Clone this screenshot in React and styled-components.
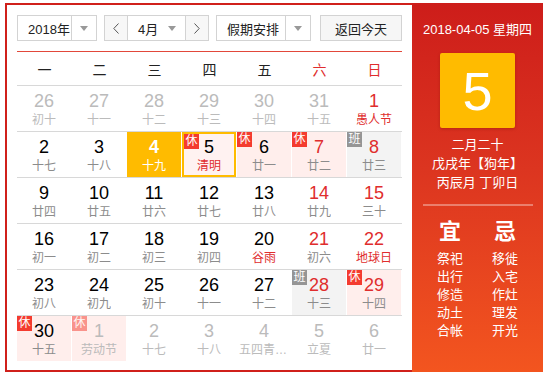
import React from 'react'
import styled, { createGlobalStyle, css } from 'styled-components'

const GlobalStyle = createGlobalStyle`
  body {
    margin: 0;
    background: #fff;
    font-family: "Liberation Sans", Arial, "Noto Sans CJK SC", sans-serif;
  }
`

const weekdays = [
  { name: '一' }, { name: '二' }, { name: '三' }, { name: '四' }, { name: '五' },
  { name: '六', red: true }, { name: '日', red: true },
]

// [day, lunar, flags] o=other month r=red number f=festival t=today s=selected x=休 b=班
const weeks = [
  [[26, '初十', 'o'], [27, '十一', 'o'], [28, '十二', 'o'], [29, '十三', 'o'], [30, '十四', 'o'], [31, '十五', 'o'], [1, '愚人节', 'rf']],
  [[2, '十七', ''], [3, '十八', ''], [4, '十九', 't'], [5, '清明', 'sxf'], [6, '廿一', 'x'], [7, '廿二', 'xr'], [8, '廿三', 'br']],
  [[9, '廿四', ''], [10, '廿五', ''], [11, '廿六', ''], [12, '廿七', ''], [13, '廿八', ''], [14, '廿九', 'r'], [15, '三十', 'r']],
  [[16, '初一', ''], [17, '初二', ''], [18, '初三', ''], [19, '初四', ''], [20, '谷雨', 'f'], [21, '初六', 'r'], [22, '地球日', 'rf']],
  [[23, '初八', ''], [24, '初九', ''], [25, '初十', ''], [26, '十一', ''], [27, '十二', ''], [28, '十三', 'br'], [29, '十四', 'xr']],
  [[30, '十五', 'x'], [1, '劳动节', 'ox'], [2, '十七', 'o'], [3, '十八', 'o'], [4, '五四青年节', 'o'], [5, '立夏', 'o'], [6, '廿一', 'o']],
]

const good = ['祭祀', '出行', '修造', '动土', '合帐']
const bad = ['移徙', '入宅', '作灶', '理发', '开光']

const Chevron = ({ left }) => (
  <svg width="6" height="11" viewBox="0 0 6 11">
    <polyline
      points={left ? '5.5,0.5 0.8,5.5 5.5,10.5' : '0.5,0.5 5.2,5.5 0.5,10.5'}
      fill="none"
      stroke="#555"
      strokeWidth="1"
    />
  </svg>
)

const DayCell = ({ day }) => {
  const [num, lunar, flags] = day
  const has = (c) => flags.includes(c)
  return (
    <Cell
      $today={has('t')}
      $selected={has('s')}
      $rest={has('x')}
      $work={has('b')}
    >
      {has('x') && <Badge $faded={has('o')}>休</Badge>}
      {has('b') && <Badge $work>班</Badge>}
      <DayNum $other={has('o')} $red={has('r')} $today={has('t')}>{num}</DayNum>
      <Lunar $other={has('o')} $festival={has('f')} $today={has('t')}>{lunar}</Lunar>
    </Cell>
  )
}

const App = () => {
  return (
    <React.Fragment>
      <GlobalStyle />
      <Page>
        <Frame>
          <Main>
            <Toolbar>
              <Select $width={80}>
                <SelectText>2018年</SelectText>
                <SelectArrow><Caret /></SelectArrow>
              </Select>
              <MonthGroup>
                <NavButton><Chevron left /></NavButton>
                <MonthSelect>
                  <span>4月</span>
                  <Caret />
                </MonthSelect>
                <NavButton><Chevron /></NavButton>
              </MonthGroup>
              <Select $width={95}>
                <SelectText>假期安排</SelectText>
                <SelectArrow><Caret /></SelectArrow>
              </Select>
              <TodayButton>返回今天</TodayButton>
            </Toolbar>
            <HeadRow>
              {weekdays.map((w) => (
                <HeadCell key={w.name} $red={w.red}>{w.name}</HeadCell>
              ))}
            </HeadRow>
            {weeks.map((week, i) => (
              <WeekRow key={i} $last={i === weeks.length - 1}>
                {week.map((day, j) => (
                  <DayCell key={j} day={day} />
                ))}
              </WeekRow>
            ))}
          </Main>
          <Side>
            <SideDate>2018-04-05 星期四</SideDate>
            <BigDay>5</BigDay>
            <SideLunar>
              <div>二月二十</div>
              <div>戊戌年【狗年】</div>
              <div>丙辰月 丁卯日</div>
            </SideLunar>
            <SideDivider />
            <Almanac>
              <AlmanacCol>
                <AlmanacTitle>宜</AlmanacTitle>
                {good.map((g) => <AlmanacItem key={g}>{g}</AlmanacItem>)}
              </AlmanacCol>
              <AlmanacCol>
                <AlmanacTitle>忌</AlmanacTitle>
                {bad.map((b) => <AlmanacItem key={b}>{b}</AlmanacItem>)}
              </AlmanacCol>
            </Almanac>
          </Side>
        </Frame>
      </Page>
    </React.Fragment>
  )
}

const Page = styled.div`
  padding: 3px 0 0 5px;
`

const Frame = styled.div`
  display: flex;
  width: 538px;
  height: 369px;
`

const Main = styled.div`
  box-sizing: border-box;
  width: 407px;
  height: 369px;
  border: 2px solid #d0201b;
  border-right: none;
  padding: 10px 10px 0 10px;
  background: #fff;
`

const Toolbar = styled.div`
  display: flex;
  align-items: center;
  height: 26px;
  padding-bottom: 10px;
  border-bottom: 1px solid #e2483a;
`

const Select = styled.div`
  box-sizing: border-box;
  display: flex;
  width: ${({ $width }) => $width}px;
  height: 26px;
  border: 1px solid #d3d3d3;
  background: #fff;
  margin-right: 7px;
  font-size: 13px;
  color: #222;
`

const SelectText = styled.div`
  flex: 1;
  display: flex;
  align-items: center;
  padding-left: 10px;
  border-right: 1px solid #d3d3d3;
`

const SelectArrow = styled.div`
  width: 24px;
  display: flex;
  align-items: center;
  justify-content: center;
`

const Caret = styled.span`
  display: inline-block;
  width: 0;
  height: 0;
  border-left: 4px solid transparent;
  border-right: 4px solid transparent;
  border-top: 5px solid #999;
`

const MonthGroup = styled.div`
  box-sizing: border-box;
  display: flex;
  width: 105px;
  height: 26px;
  border: 1px solid #d3d3d3;
  margin-right: 7px;
`

const NavButton = styled.div`
  width: 22px;
  display: flex;
  align-items: center;
  justify-content: center;
  background: #f7f7f7;
`

const MonthSelect = styled.div`
  flex: 1;
  display: flex;
  align-items: center;
  justify-content: space-between;
  padding: 0 9px 0 10px;
  border-left: 1px solid #d3d3d3;
  border-right: 1px solid #d3d3d3;
  background: #fff;
  font-size: 13px;
  color: #222;
`

const TodayButton = styled.div`
  box-sizing: border-box;
  width: 82px;
  height: 26px;
  margin-left: 2px;
  border: 1px solid #d3d3d3;
  background: #f6f6f6;
  display: flex;
  align-items: center;
  justify-content: center;
  font-size: 13px;
  color: #222;
`

const HeadRow = styled.div`
  display: grid;
  grid-template-columns: repeat(7, 55px);
  height: 33px;
  border-bottom: 1px solid #d8d8d8;
`

const HeadCell = styled.div`
  display: flex;
  align-items: center;
  justify-content: center;
  font-size: 14px;
  color: ${({ $red }) => ($red ? '#e02d2d' : '#222')};
`

const WeekRow = styled.div`
  display: grid;
  grid-template-columns: repeat(7, 55px);
  height: 45px;
  border-bottom: ${({ $last }) => ($last ? 'none' : '1px solid #d8d8d8')};
`

const Cell = styled.div`
  position: relative;
  box-sizing: border-box;
  width: 54px;
  height: 45px;
  display: flex;
  flex-direction: column;
  align-items: center;
  padding-top: 5px;
  ${({ $rest }) => $rest && css`background: #ffeeec;`}
  ${({ $work }) => $work && css`background: #f3f3f3;`}
  ${({ $today }) => $today && css`background: #ffbb00;`}
  ${({ $selected }) => $selected && css`
    border: 2px solid #ffbb00;
    padding-top: 3px;
    background: #fff2f1;
  `}
`

const Badge = styled.div`
  position: absolute;
  left: 0;
  top: 0;
  width: 15px;
  height: 15px;
  line-height: 15px;
  text-align: center;
  font-size: 12px;
  color: #fff;
  background: ${({ $work }) => ($work ? '#959595' : '#f43b2f')};
  opacity: ${({ $faded }) => ($faded ? 0.5 : 1)};
`

const DayNum = styled.div`
  font-size: 18px;
  line-height: 20px;
  color: ${({ $other, $red, $today }) =>
    $today ? '#fff' : $other ? '#bbb' : $red ? '#e02d2d' : '#000'};
  font-weight: ${({ $today }) => ($today ? 'bold' : 'normal')};
`

const Lunar = styled.div`
  max-width: 50px;
  margin-top: 1px;
  font-size: 12px;
  line-height: 16px;
  white-space: nowrap;
  overflow: hidden;
  text-overflow: ellipsis;
  color: ${({ $other, $festival, $today }) =>
    $today ? '#fff' : $other ? '#bbb' : $festival ? '#e02d2d' : '#8c8c8c'};
`

const Side = styled.div`
  width: 131px;
  height: 369px;
  display: flex;
  flex-direction: column;
  align-items: center;
  background: linear-gradient(to bottom, #cd1d1a 0%, #dc3520 45%, #f3551f 100%);
  color: #fff;
`

const SideDate = styled.div`
  margin-top: 18px;
  font-size: 13px;
  line-height: 18px;
`

const BigDay = styled.div`
  margin-top: 14px;
  width: 75px;
  height: 75px;
  border-radius: 2px;
  background: #ffbb00;
  display: flex;
  align-items: center;
  justify-content: center;
  font-size: 54px;
  color: #fff;
  box-shadow: 0 1px 3px rgba(120, 20, 0, 0.35);
`

const SideLunar = styled.div`
  margin-top: 7px;
  font-size: 13px;
  line-height: 19px;
  text-align: center;
`

const SideDivider = styled.div`
  margin-top: 12px;
  width: 110px;
  height: 2px;
  background: rgba(255, 255, 255, 0.35);
`

const Almanac = styled.div`
  margin-top: 14px;
  display: flex;
`

const AlmanacCol = styled.div`
  width: 55px;
  display: flex;
  flex-direction: column;
  align-items: center;
`

const AlmanacTitle = styled.div`
  font-size: 22px;
  line-height: 24px;
  font-weight: bold;
  margin-bottom: 6px;
`

const AlmanacItem = styled.div`
  font-size: 13px;
  line-height: 18px;
`

export default App
